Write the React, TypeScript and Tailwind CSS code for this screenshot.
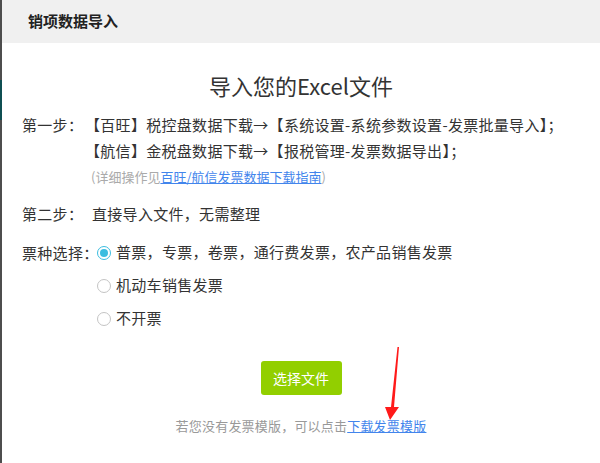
import { useState } from "react";

const font = { fontFamily: '"Noto Sans CJK SC", "Microsoft YaHei", sans-serif' };

const ticketTypes = [
  "普票，专票，卷票，通行费发票，农产品销售发票",
  "机动车销售发票",
  "不开票",
];

const Radio = ({ checked }: { checked: boolean }) => (
  <span
    className={`flex h-[14px] w-[14px] shrink-0 items-center justify-center rounded-full border ${
      checked ? "border-[#3bbde0]" : "border-[#c4c4c4]"
    } bg-white`}
  >
    {checked && <span className="h-[8px] w-[8px] rounded-full bg-[#3bbde0]" />}
  </span>
);

const App = () => {
  const [ticket, setTicket] = useState(0);

  return (
    <div className="flex h-[463px] w-[600px] overflow-hidden bg-white text-[#333]" style={font}>
      {/* 背景遮罩露出的边 */}
      <div className="flex w-[2px] flex-col bg-[#4d4d4d]">
        <div className="mt-[80px] h-[40px] bg-[#0f4f52]" />
      </div>

      <div className="relative flex flex-1 flex-col">
        <div className="flex h-[43px] items-center bg-[#f0f0f0] pl-[26px] text-[15px] font-bold text-[#222]">
          销项数据导入
        </div>

        <h1 className="mt-[27px] text-center text-[22px] leading-[30px] text-[#333]">
          导入您的Excel文件
        </h1>

        <div className="mt-[12px] flex pl-[20px] text-[15px] tracking-[0.3px]">
          <span className="w-[63px] shrink-0 whitespace-nowrap leading-[26px]">第一步：</span>
          <div className="flex flex-col">
            <span className="leading-[26px]">【百旺】税控盘数据下载→【系统设置-系统参数设置-发票批量导入】；</span>
            <span className="leading-[26px]">【航信】金税盘数据下载→【报税管理-发票数据导出】；</span>
            <span className="pl-[6px] text-[13px] leading-[25px] tracking-normal text-[#aaa]">
              (详细操作见
              <a href="#" className="text-[#4285ec] underline">
                百旺/航信发票数据下载指南
              </a>
              )
            </span>
          </div>
        </div>

        <div className="mt-[12px] flex pl-[20px] text-[15px] leading-[26px] tracking-[0.3px]">
          <span className="w-[70px] shrink-0 whitespace-nowrap">第二步：</span>
          <span>直接导入文件，无需整理</span>
        </div>

        <div className="mt-[9px] flex pl-[20px] text-[15px] tracking-[0.3px]">
          <span className="w-[75px] shrink-0 whitespace-nowrap leading-[33px]">票种选择：</span>
          <div className="flex flex-col">
            {ticketTypes.map((t, i) => (
              <label
                key={t}
                onClick={() => setTicket(i)}
                className="flex h-[33px] cursor-pointer items-center gap-[5px]"
              >
                <Radio checked={ticket === i} />
                <span>{t}</span>
              </label>
            ))}
          </div>
        </div>

        <div className="mt-[26px] flex justify-center">
          <button className="h-[34px] w-[81px] rounded-[3px] bg-[#92cf00] text-[14px] text-white">
            选择文件
          </button>
        </div>

        <p className="mt-[21px] text-center text-[13px] leading-[20px] tracking-[0.2px] text-[#999]">
          若您没有发票模版，可以点击
          <a href="#" className="text-[#4285ec] underline">
            下载发票模版
          </a>
        </p>

        {/* 标注箭头 */}
        <svg className="absolute left-[378px] top-[345px]" width="24" height="78" viewBox="0 0 24 78">
          <polygon points="17.5,2 19,2 14,62 19,62 10,75 5,62 11,62" fill="#ff1a1a" />
        </svg>
      </div>
    </div>
  );
};

export default App;
